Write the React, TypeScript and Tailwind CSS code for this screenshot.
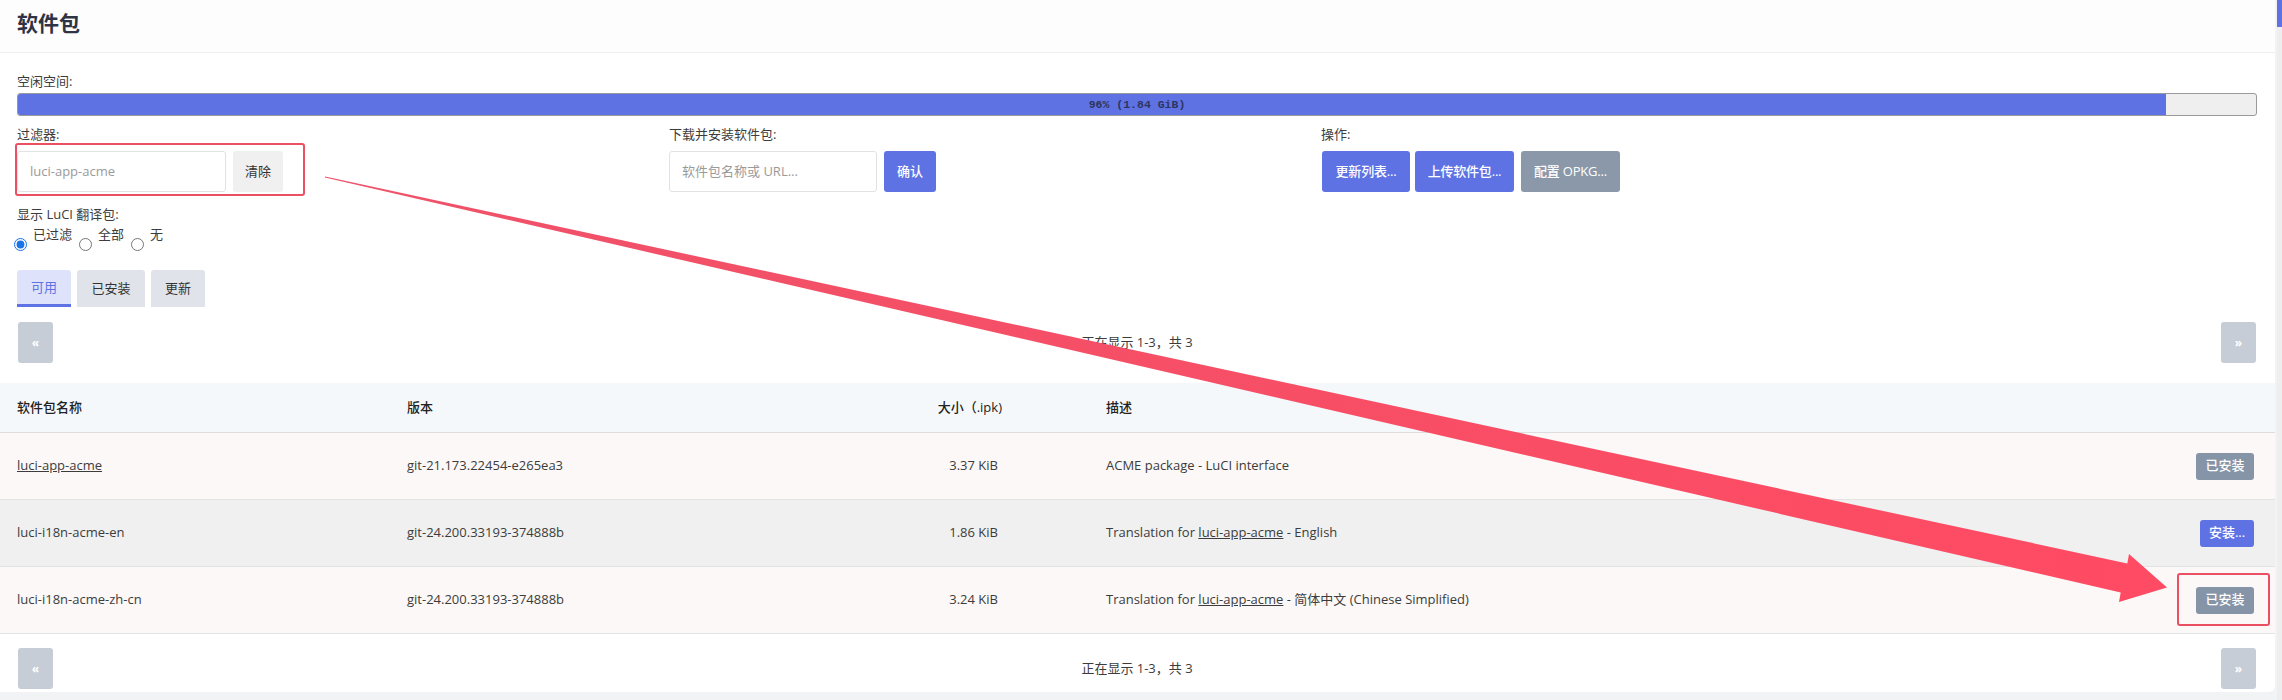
import type { ReactNode } from "react";

type Pkg = {
  name: string;
  link?: boolean;
  version: string;
  size: string;
  desc: ReactNode;
  installed: boolean;
};

const packages: Pkg[] = [
  {
    name: "luci-app-acme",
    link: true,
    version: "git-21.173.22454-e265ea3",
    size: "3.37 KiB",
    desc: "ACME package - LuCI interface",
    installed: true,
  },
  {
    name: "luci-i18n-acme-en",
    version: "git-24.200.33193-374888b",
    size: "1.86 KiB",
    desc: (
      <>
        Translation for <span className="underline">luci-app-acme</span> - English
      </>
    ),
    installed: false,
  },
  {
    name: "luci-i18n-acme-zh-cn",
    version: "git-24.200.33193-374888b",
    size: "3.24 KiB",
    desc: (
      <>
        Translation for <span className="underline">luci-app-acme</span> - 简体中文 (Chinese Simplified)
      </>
    ),
    installed: true,
  },
];

const rowBg = ["bg-[#fbf8f7]", "bg-[#f0f0f0]", "bg-[#fbf8f7]"];

function Pager() {
  return (
    <div className="flex items-center justify-between pl-[18px] pr-[19px]">
      <div className="flex h-[41px] w-[35px] items-center justify-center rounded-[3px] bg-[#c6cdd6] text-[12px] font-bold text-white">
        «
      </div>
      <div className="text-[13px] text-[#3c3c3c]">正在显示 1-3，共 3</div>
      <div className="flex h-[41px] w-[35px] items-center justify-center rounded-[3px] bg-[#c6cdd6] text-[12px] font-bold text-white">
        »
      </div>
    </div>
  );
}

function Label({ children }: { children: ReactNode }) {
  return <div className="h-[20px] text-[13px] leading-[20px] text-[#3c3c3c]">{children}</div>;
}

function Arrow() {
  return (
    <svg className="pointer-events-none absolute left-0 top-0" width="2282" height="700" viewBox="0 0 2282 700">
      <defs>
        <linearGradient id="arrowFill" x1="325" y1="177" x2="2167" y2="587" gradientUnits="userSpaceOnUse">
          <stop offset="0" stopColor="#ee5269" />
          <stop offset="1" stopColor="#ff4b63" />
        </linearGradient>
      </defs>
      <polygon
        fill="url(#arrowFill)"
        points="325.1,176.5 2127.3,563.4 2129,554 2167,587.5 2119,602 2120.7,592.6 324.9,177.5"
      />
    </svg>
  );
}

export default function App() {
  return (
    <div className="relative flex h-[700px] w-[2282px] overflow-hidden bg-[#f2f3f5] font-['Open_Sans','Noto_Sans_CJK_SC',sans-serif]">
      <div className="flex h-[692px] w-[2275px] flex-col rounded-br-[6px] bg-white">
        <div className="h-[53px] border-b border-[#f0f0f0] bg-[#fdfdfd] px-[17px] pt-[9px]">
          <h2 className="text-[21px] font-bold leading-[28px] text-[#2f3344]">软件包</h2>
        </div>

        <div className="pl-[17px] pr-[18px] pt-[18px]">
          <Label>空闲空间:</Label>
          <div className="relative mt-[2px] h-[23px] overflow-hidden rounded-[3px] border border-[#9a9a9a] bg-[#efefef]">
            <div className="h-full w-[96%] bg-[#5e72e4]" />
            <div className="absolute inset-0 flex items-center justify-center font-['Liberation_Mono',monospace] text-[11.5px] font-bold text-[#2d3561]">
              96% (1.84 GiB)
            </div>
          </div>

          <div className="mt-[8px] grid grid-cols-[652px_652px_652px]">
            <div>
              <Label>过滤器:</Label>
              <div className="mt-[7px] flex gap-[7px]">
                <div className="flex h-[41px] w-[209px] items-center rounded-[3px] border border-[#e2e2e2] px-[12px] text-[13px] text-[#9a9a9a]">
                  luci-app-acme
                </div>
                <div className="flex h-[41px] w-[50px] items-center justify-center rounded-[3px] bg-[#f0f0f0] text-[13px] text-[#333]">
                  清除
                </div>
              </div>
            </div>
            <div>
              <Label>下载并安装软件包:</Label>
              <div className="mt-[7px] flex gap-[7px]">
                <div className="flex h-[41px] w-[208px] items-center rounded-[3px] border border-[#e2e2e2] px-[12px] text-[13px] text-[#9a9a9a]">
                  软件包名称或 URL...
                </div>
                <div className="flex h-[41px] w-[52px] items-center justify-center rounded-[3px] bg-[#5e72e4] text-[13px] font-medium text-white">
                  确认
                </div>
              </div>
            </div>
            <div>
              <Label>操作:</Label>
              <div className="mt-[7px] flex gap-[5px] pl-[1px]">
                <div className="flex h-[41px] w-[88px] items-center justify-center rounded-[3px] bg-[#5e72e4] text-[13px] font-medium tracking-[-0.2px] text-white">
                  更新列表...
                </div>
                <div className="flex h-[41px] w-[99px] items-center justify-center rounded-[3px] bg-[#5e72e4] text-[13px] font-medium tracking-[-0.2px] text-white">
                  上传软件包...
                </div>
                <div className="ml-[2px] flex h-[41px] w-[99px] items-center justify-center rounded-[3px] bg-[#8a98a9] text-[13px] font-medium tracking-[-0.2px] text-white">
                  配置 OPKG...
                </div>
              </div>
            </div>
          </div>

          <div className="mt-[12px]">
            <Label>显示 LuCI 翻译包:</Label>
            <div className="flex h-[28px] items-start text-[13px] leading-[20px] text-[#3c3c3c]">
              <input type="radio" name="i18n" defaultChecked className="-ml-[3px] mt-[14px] h-[13px] w-[13px] accent-[#1a73e8]" />
              <span className="ml-[6px]">已过滤</span>
              <input type="radio" name="i18n" className="ml-[7px] mt-[14px] h-[13px] w-[13px]" />
              <span className="ml-[6px]">全部</span>
              <input type="radio" name="i18n" className="ml-[7px] mt-[14px] h-[13px] w-[13px]" />
              <span className="ml-[6px]">无</span>
            </div>
          </div>

          <div className="mt-[18px] flex gap-[6px]">
            <div className="flex h-[37px] w-[54px] items-center justify-center rounded-t-[3px] border-b-[3px] border-[#5e72e4] bg-[#dfe2fb] pt-[2px] text-[13px] text-[#5e72e4]">
              可用
            </div>
            <div className="flex h-[37px] w-[68px] items-center justify-center rounded-t-[3px] bg-[#e0e3e9] text-[13px] text-[#333]">
              已安装
            </div>
            <div className="flex h-[37px] w-[54px] items-center justify-center rounded-t-[3px] bg-[#e0e3e9] text-[13px] text-[#333]">
              更新
            </div>
          </div>
        </div>

        <div className="mt-[15px]">
          <Pager />
        </div>

        <div className="mt-[20px] text-[13px] text-[#3c3c3c]">
          <div className="flex h-[50px] items-center border-b border-[#dedede] bg-[#f5f8fb] pl-[17px] pr-[21px] font-medium text-[#222]">
            <div className="w-[390px] shrink-0">软件包名称</div>
            <div className="w-[471px] shrink-0">版本</div>
            <div className="w-[124px] shrink-0 text-right">大小（.ipk)</div>
            <div className="flex-1 pl-[104px]">描述</div>
          </div>
          {packages.map((p, i) => (
            <div
              key={p.name}
              className={`flex h-[67px] items-center border-b border-[#e3e3e3] pl-[17px] pr-[21px] ${rowBg[i]}`}
            >
              <div className={`w-[390px] shrink-0 ${p.link ? "underline" : ""}`}>{p.name}</div>
              <div className="w-[471px] shrink-0">{p.version}</div>
              <div className="w-[120px] shrink-0 text-right">{p.size}</div>
              <div className="flex-1 pl-[108px]">{p.desc}</div>
              {p.installed ? (
                <div className="flex h-[27px] w-[58px] items-center justify-center rounded-[3px] bg-[#8594a7] text-[13px] font-medium text-white">
                  已安装
                </div>
              ) : (
                <div className="flex h-[27px] w-[54px] items-center justify-center rounded-[3px] bg-[#5e72e4] text-[13px] font-medium text-white">
                  安装...
                </div>
              )}
            </div>
          ))}
        </div>

        <div className="mt-[14px]">
          <Pager />
        </div>
      </div>

      <div className="ml-auto flex w-[5px] flex-col bg-[#eeeeee]">
        <div className="h-[27px] bg-[#5e72e4]" />
      </div>

      <div className="pointer-events-none absolute left-[15px] top-[143px] h-[53px] w-[290px] rounded-[3px] border-2 border-[#ea5062]" />
      <div className="pointer-events-none absolute left-[2177px] top-[573px] h-[53px] w-[93px] rounded-[3px] border-2 border-[#ea5062]" />
      <Arrow />
    </div>
  );
}
